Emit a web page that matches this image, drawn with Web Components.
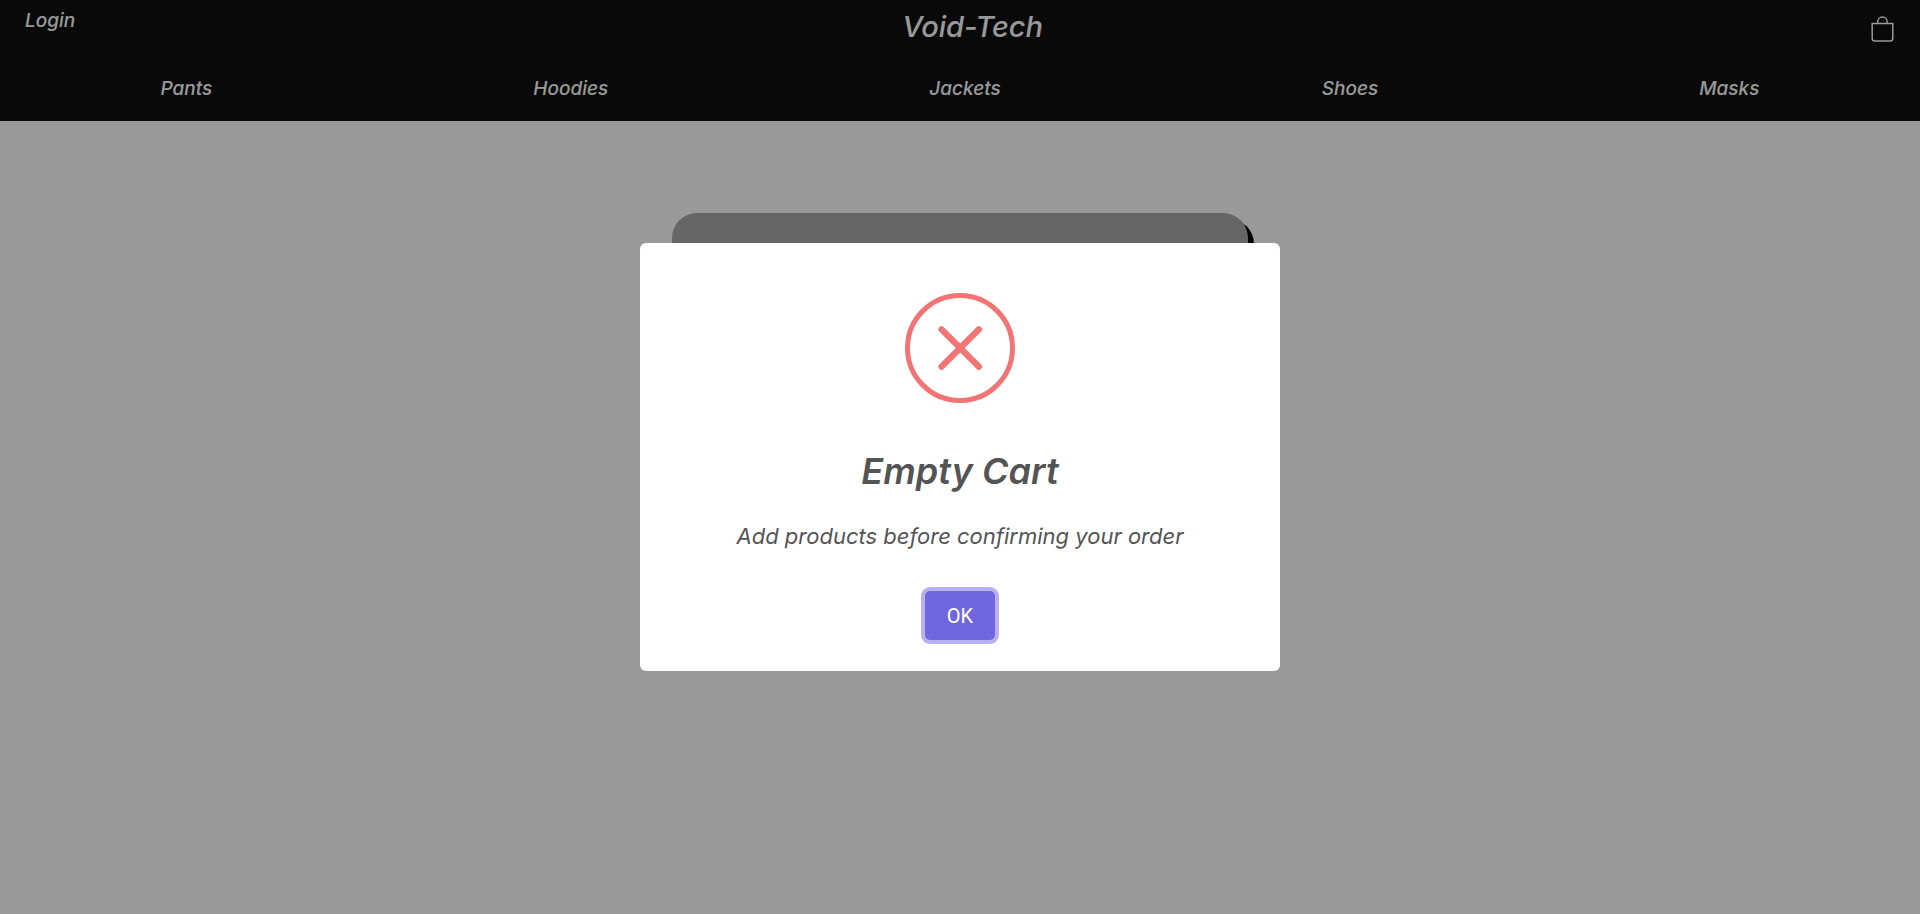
<!DOCTYPE html>
<html lang="en">
<head>
<meta charset="utf-8">
<title>Void-Tech</title>
<style>
  html, body { margin: 0; min-height: 100%; background: #fff; }
  body { font: italic 500 19px/24px Inter, "Liberation Sans", sans-serif; color: #fff; }
</style>
</head>
<body>
<store-header>
  <store-link slot="account" href="#login">Login</store-link>
  <span slot="brand">Void-Tech</span>
  <store-link href="#pants">Pants</store-link>
  <store-link href="#hoodies">Hoodies</store-link>
  <store-link href="#jackets">Jackets</store-link>
  <store-link href="#shoes">Shoes</store-link>
  <store-link href="#masks">Masks</store-link>
</store-header>
<cart-card></cart-card>
<alert-dialog>
  <span slot="title">Empty Cart</span>
  <span slot="text">Add products before confirming your order</span>
  <span slot="action">OK</span>
</alert-dialog>

<template id="header-template">
  <style>
    :host { display: block; background: #0f0f0f; padding: 9px 0 20px; }
    .top { display: flex; justify-content: space-between; align-items: flex-start; padding: 0 25px; }
    h1 { margin: 0; font-size: 29px; line-height: 36px; font-weight: 500; }
    .bag { display: block; color: inherit; margin-top: 6px; }
    svg { display: block; width: 25px; height: 28px; }
    nav { display: flex; justify-content: space-around; margin-top: 32px; }
  </style>
  <div class="top">
    <slot name="account"></slot>
    <h1><slot name="brand"></slot></h1>
    <a class="bag" href="#cart" aria-label="Cart">
      <svg viewBox="0 0 25 28" fill="none" stroke="currentColor" stroke-width="1.5">
        <path d="M2.200 8.500h20.600v15a2.400 2.400 0 0 1-2.400 2.400H4.600a2.400 2.400 0 0 1-2.400-2.400z"/>
        <path d="M7.700 8.500V7a4.700 4.900 0 0 1 9.400 0v1.500"/>
      </svg>
    </a>
  </div>
  <nav><slot></slot></nav>
</template>

<template id="link-template">
  <style>
    :host { display: block; }
    a { display: block; color: inherit; text-decoration: none; }
  </style>
  <a><slot></slot></a>
</template>

<template id="card-template">
  <style>
    :host {
      display: block; width: 30%; height: 400px; margin: 92px auto 0;
      background: #aaa; border-radius: 25px; box-shadow: 6px 6px 0 #000;
    }
  </style>
</template>

<template id="dialog-template">
  <style>
    :host {
      position: fixed; inset: 0; display: flex; align-items: center; justify-content: center;
      background: rgba(0, 0, 0, .4); color: #545454;
    }
    section {
      box-sizing: border-box; width: 640px; max-width: 100%; padding: 50px 20px 31px;
      display: flex; flex-direction: column; align-items: center; text-align: center;
      background: #fff; border-radius: 6px;
    }
    svg { width: 110px; height: 110px; fill: none; stroke: #f27474; }
    h2 { margin: 46px 0 0; font-size: 36px; line-height: 44px; font-weight: 600; }
    p { margin: 29px 0 41px; font-size: 22px; line-height: 28px; font-weight: 400; }
    button {
      width: 70px; height: 49px; padding: 0; border: 0; border-radius: 5px;
      background: #7066e0; color: #fff; font: 400 20px/24px Roboto, sans-serif;
      box-shadow: 0 0 0 4px rgba(112, 102, 224, .5); outline: none;
    }
  </style>
  <section role="alertdialog" aria-modal="true" aria-labelledby="title" aria-describedby="text">
    <svg viewBox="0 0 110 110" aria-hidden="true">
      <circle cx="55" cy="55" r="52.500" stroke-width="5"/>
      <g fill="#f27474" stroke="none">
        <rect x="25.800" y="51.900" width="58.800" height="6.200" rx="2.500" transform="rotate(45 55.200 55)"/>
        <rect x="25.800" y="51.900" width="58.800" height="6.200" rx="2.500" transform="rotate(-45 55.200 55)"/>
      </g>
    </svg>
    <h2 id="title"><slot name="title"></slot></h2>
    <p id="text"><slot name="text"></slot></p>
    <button type="button"><slot name="action"></slot></button>
  </section>
</template>

<script>
  class TemplateElement extends HTMLElement {
    constructor() {
      super();
      const template = document.getElementById(this.constructor.template);
      this.attachShadow({ mode: 'open' }).append(template.content.cloneNode(true));
    }
  }
  customElements.define('store-header', class extends TemplateElement {
    static template = 'header-template';
  });
  customElements.define('store-link', class extends TemplateElement {
    static template = 'link-template';
    connectedCallback() {
      this.shadowRoot.querySelector('a').href = this.getAttribute('href');
    }
  });
  customElements.define('cart-card', class extends TemplateElement {
    static template = 'card-template';
  });
  customElements.define('alert-dialog', class extends TemplateElement {
    static template = 'dialog-template';
    connectedCallback() {
      this.shadowRoot.querySelector('button').onclick = () => this.remove();
    }
  });
</script>
</body>
</html>
